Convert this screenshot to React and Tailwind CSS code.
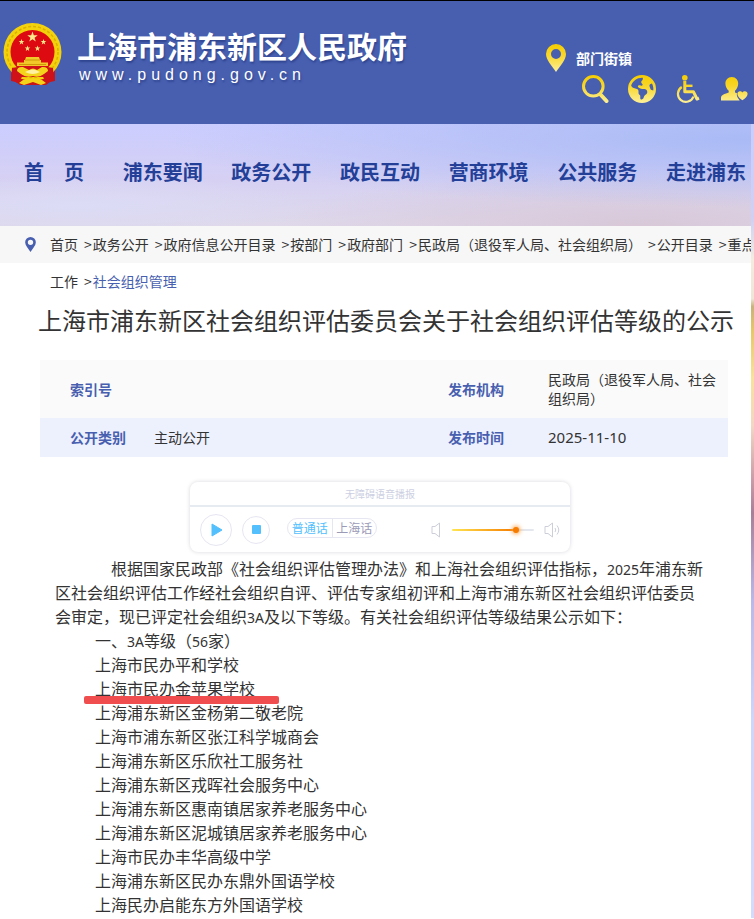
import { useState } from 'react';
import { FaEarthAmericas } from 'react-icons/fa6';

const navItems = ['首　页', '浦东要闻', '政务公开', '政民互动', '营商环境', '公共服务', '走进浦东'];

const crumbs = [
  '首页',
  '政务公开',
  '政府信息公开目录',
  '按部门',
  '政府部门',
  '民政局（退役军人局、社会组织局）',
  '公开目录',
  '重点工作',
  '社会组织管理',
];

const orgs = [
  { name: '上海市民办平和学校' },
  { name: '上海市民办金苹果学校', marked: true },
  { name: '上海浦东新区金杨第二敬老院' },
  { name: '上海市浦东新区张江科学城商会' },
  { name: '上海浦东新区乐欣社工服务社' },
  { name: '上海浦东新区戎晖社会服务中心' },
  { name: '上海浦东新区惠南镇居家养老服务中心' },
  { name: '上海浦东新区泥城镇居家养老服务中心' },
  { name: '上海市民办丰华高级中学' },
  { name: '上海浦东新区民办东鼎外国语学校' },
  { name: '上海民办启能东方外国语学校' },
];

function Star({ x, y, r }) {
  const pts = [];
  for (let i = 0; i < 10; i++) {
    const a = (Math.PI / 5) * i - Math.PI / 2;
    const d = i % 2 ? r * 0.4 : r;
    pts.push(`${x + d * Math.cos(a)},${y + d * Math.sin(a)}`);
  }
  return <polygon points={pts.join(' ')} fill="#ffe98a" />;
}

function Emblem() {
  return (
    <svg viewBox="0 0 60 65" className="h-[65px] w-[60px] shrink-0" aria-hidden="true">
      <path d="M8 44L8 60L13 61L17 64H43L47 61L52 60L52 44Z" fill="#c9151a" />
      <circle cx="29.5" cy="31" r="29" fill="#f3d20c" />
      <circle cx="29.5" cy="31" r="25.5" fill="none" stroke="#dcb000" strokeWidth="1.5" strokeDasharray="3 2" />
      <circle cx="29.5" cy="31" r="22" fill="#dd0a12" />
      <Star x={29.5} y={16} r={5.5} />
      <Star x={18.5} y={21} r={3} />
      <Star x={40.5} y={21} r={3} />
      <Star x={24.5} y={27.5} r={3} />
      <Star x={34.5} y={27.5} r={3} />
      <path d="M23 36H36L37 39H38V41.5H45V45H14V41.5H21V39H22Z" fill="#f1c929" />
      <path d="M22 39H37M16 43.5H43" stroke="#c98d00" strokeWidth="0.8" fill="none" />
      <path d="M9 47L20 45H39L50 47L51 58L45 62L40 56H19L14 62L8 58Z" fill="#cf1219" />
      <path d="M14 50Q14 45.5 20 46L26 49Q30 46 34 49L39 46Q45 45.5 45 50L41 53Q36 57 30 55Q23 57 18 53Z" fill="#f4d31a" />
      <path d="M22 51Q30 46 37 51Q30 55 22 51Z" fill="#fff0a0" />
      <path d="M20 59Q30 56 39 59L43 62L38 64L30 61L21 64L16 62Z" fill="#f4d31a" />
    </svg>
  );
}

function GoldDefs() {
  return (
    <svg width="0" height="0" className="absolute" aria-hidden="true">
      <defs>
        <linearGradient id="gold" x1="0" y1="0" x2="0" y2="1">
          <stop offset="0" stopColor="#f6cd00" />
          <stop offset="0.4" stopColor="#f8d62a" />
          <stop offset="1" stopColor="#fdf09a" />
        </linearGradient>
        <linearGradient id="gold-abs" gradientUnits="userSpaceOnUse" x1="0" y1="0" x2="0" y2="28">
          <stop offset="0" stopColor="#f6cd00" />
          <stop offset="0.4" stopColor="#f8d62a" />
          <stop offset="1" stopColor="#fdf09a" />
        </linearGradient>
      </defs>
    </svg>
  );
}

function SearchIcon() {
  return (
    <svg viewBox="1 0 28 28" className="size-7" fill="none" stroke="url(#gold-abs)">
      <circle cx="12.3" cy="11.3" r="9.8" strokeWidth="3" />
      <path d="M19.5 19.5L25.5 26" strokeWidth="4" strokeLinecap="round" />
    </svg>
  );
}

function WheelchairIcon() {
  return (
    <svg viewBox="0 0 28 28" className="size-7" fill="none" stroke="url(#gold-abs)" strokeWidth="2">
      <circle cx="10.8" cy="2.8" r="2.8" fill="url(#gold-abs)" stroke="none" />
      <path d="M10.8 6V16.8H19.5L23 24L25 23.2" strokeWidth="3" strokeLinejoin="round" />
      <path d="M10 10.8H18.5" strokeWidth="2.4" />
      <path d="M7.8 12A8 8 0 1 0 19.5 21.5" strokeWidth="2.2" />
    </svg>
  );
}

function UserIcon() {
  return (
    <svg viewBox="0 0 28 28" className="size-7" fill="url(#gold-abs)">
      <path d="M11.8 2C15.8 2 18.2 5 18.2 8.6C18.2 12 16.6 14.3 15 15.8V17.6L17 18.3C16.3 20.8 17.5 23 19.7 25.4H1V23C1 20.5 3.3 19.4 8.7 17.6V15.8C7 14.3 5.4 12 5.4 8.6C5.4 5 7.8 2 11.8 2Z" />
      <path d="M22.4 17.6C23.5 15.6 27.6 15.6 27.6 19C27.6 21.5 24.7 23.5 22.4 25.3C20.1 23.5 17.4 21.5 17.4 19C17.4 15.6 21.3 15.6 22.4 17.6Z" />
    </svg>
  );
}

function Pin({ className }) {
  return (
    <svg viewBox="0 0 20 28" className={className} aria-hidden="true">
      <path
        fillRule="evenodd"
        d="M10 0A10 10 0 0 1 20 10C20 16 14 22 10 28C6 22 0 16 0 10A10 10 0 0 1 10 0ZM10 5A5 5 0 1 0 10 15A5 5 0 1 0 10 5Z"
      />
    </svg>
  );
}

function Header() {
  return (
    <header className="flex h-[125px] border-t border-black bg-[#485fb0]">
      <GoldDefs />
      <a href="#" className="flex items-start pl-[3px] pt-5 text-white">
        <Emblem />
        <span className="pl-3.5 pt-1.5 [text-shadow:1px_2px_2px_#2f4590]">
          <span className="block text-[30px] leading-9 font-bold whitespace-nowrap">上海市浦东新区人民政府</span>
          <span className="block pl-0.5 font-['Liberation_Sans'] text-base leading-6 tracking-[5px]">www.pudong.gov.cn</span>
        </span>
      </a>
      <div className="ml-auto pt-[43px] pr-1.5">
        <a href="#" className="-ml-0.5 flex h-7 items-center gap-2.5 text-sm font-bold text-white">
          <Pin className="h-7 w-5 fill-[url(#gold)]" />
          部门街镇
        </a>
        <div className="mt-[3px] flex gap-[18px] pl-[34px]">
          <button aria-label="搜索"><SearchIcon /></button>
          <button aria-label="语言"><FaEarthAmericas className="size-7 fill-[url(#gold)]" /></button>
          <button aria-label="无障碍"><WheelchairIcon /></button>
          <button aria-label="用户中心"><UserIcon /></button>
        </div>
      </div>
    </header>
  );
}

function MainNav() {
  return (
    <nav className="flex h-[102px] items-center justify-between bg-[radial-gradient(ellipse_at_100%_15%,#a9baf5_0%,transparent_55%),radial-gradient(ellipse_at_10%_80%,#dcdcf6_0%,transparent_25%),radial-gradient(ellipse_at_85%_100%,#d8c8d8_0%,transparent_40%),linear-gradient(to_bottom,#cbcdff,#d5d0f4_50%,#dfd9ea)] pr-[5px] pb-1.5 pl-3.5 text-xl font-bold text-[#233f97]">
      {navItems.map((item) => (
        <a key={item} href="#" className="w-20 text-center whitespace-nowrap">
          {item}
        </a>
      ))}
    </nav>
  );
}

function Breadcrumb() {
  return (
    <nav aria-label="当前位置" className="h-[74px] overflow-hidden bg-[linear-gradient(#f7f7f7_37px,#fff_37px)]">
      <div className="-mr-2 flex">
        <Pin className="mt-[11px] mr-[14px] ml-[25px] h-[15px] w-[11px] shrink-0 fill-[#485fb0]" />
        <p className="text-sm leading-[37px]">
          {crumbs.map((crumb, i) => (
            <span key={crumb}>
              {i > 0 && <span className="mr-px ml-1.5">&gt;</span>}
              <a href="#" className={i === crumbs.length - 1 ? 'text-[#485fb0]' : ''}>
                {crumb}
              </a>
            </span>
          ))}
        </p>
      </div>
    </nav>
  );
}

function InfoTable() {
  return (
    <table className="mt-[22px] w-full table-fixed text-left text-sm leading-[19px]">
      <colgroup>
        <col className="w-[114px]" />
        <col />
        <col className="w-[100px]" />
        <col className="w-[180px]" />
      </colgroup>
      <tbody>
        <tr className="h-[58px] bg-[#fafafa]">
          <th scope="row" className="pl-[30px] text-[#485fb0]">索引号</th>
          <td></td>
          <th scope="row" className="text-[#485fb0]">发布机构</th>
          <td className="pr-2">民政局（退役军人局、社会组织局）</td>
        </tr>
        <tr className="h-[39px] bg-[#edf0fd]">
          <th scope="row" className="pl-[30px] text-[#485fb0]">公开类别</th>
          <td>主动公开</td>
          <th scope="row" className="text-[#485fb0]">发布时间</th>
          <td className="font-['Noto_Sans'] text-[15px]">2025-11-10</td>
        </tr>
      </tbody>
    </table>
  );
}

function AudioPlayer() {
  const [volume, setVolume] = useState(80);
  const [lang, setLang] = useState('普通话');

  return (
    <section className="mt-[25px] ml-[150px] w-[380px] rounded-lg bg-white shadow-[0_0_4px_#d8d8de]">
      <h2 className="h-[23px] text-center text-[10px] leading-[24px] text-[#cdd0e2]">无障碍语音播报</h2>
      <div className="flex h-[47px] items-center border-t-2 border-[#e6ebf1] pl-2.5">
        <button aria-label="播放" className="flex size-8 items-center justify-center rounded-full border border-[#e6e6f2]">
          <svg viewBox="0 0 12 14" className="ml-0.5 h-3.5 w-3" fill="#53c0fd">
            <path d="M1 1L11 7L1 13Z" stroke="#53c0fd" strokeLinejoin="round" />
          </svg>
        </button>
        <button aria-label="停止" className="ml-2.5 flex size-7 items-center justify-center rounded-full border border-[#e6e6f2]">
          <span className="size-[9px] rounded-[1px] bg-[#53c0fd]" />
        </button>
        <div className="mb-1 ml-[17px] flex h-5 w-[90px] items-center rounded-full border border-[#e6e6f2] text-xs leading-[18px]">
          {['普通话', '上海话'].map((name) => (
            <button
              key={name}
              onClick={() => setLang(name)}
              className={`flex-1 whitespace-nowrap first:border-r first:border-[#e6e6f2] ${
                lang === name ? 'text-[#53c0fd]' : 'text-[#9b9bb8]'
              }`}
            >
              {name}
            </button>
          ))}
        </div>
        <svg viewBox="0 0 10 16" className="ml-[54px] h-4 w-2.5" fill="none" stroke="#cccfd8">
          <path d="M1 4.5H4L8.5 1V15L4 11.5H1Z" />
        </svg>
        <input
          type="range"
          aria-label="音量"
          value={volume}
          onChange={(e) => setVolume(Number(e.target.value))}
          className="ml-[11px] h-0.5 w-[82px] appearance-none rounded bg-[linear-gradient(to_right,#ffe552,#f57c00_77%,#e4e7ee_77%)] [&::-webkit-slider-thumb]:size-1.5 [&::-webkit-slider-thumb]:appearance-none [&::-webkit-slider-thumb]:rounded-full [&::-webkit-slider-thumb]:bg-[#f57c00] [&::-webkit-slider-thumb]:shadow-[0_0_4px_1px_#ffa64d]"
        />
        <svg viewBox="0 0 16 16" className="ml-2.5 size-4" fill="none" stroke="#cccfd8">
          <path d="M1 4.5H4L8.5 1V15L4 11.5H1ZM11 6Q12.5 8 11 10M13 3.5Q16.5 8 13 12.5" />
        </svg>
      </div>
    </section>
  );
}

// half-width digits and letters inside the Chinese body text
function Num({ children }) {
  return <span className="font-['Noto_Sans'] text-[14px] leading-none">{children}</span>;
}

function Article() {
  return (
    <article className="ml-[15px] max-w-[655px] pt-1 pb-0.5 text-base leading-6">
      <p className="indent-14">
        根据国家民政部《社会组织评估管理办法》和上海社会组织评估指标，<Num>2025</Num>年浦东新区社会组织评估工作经社会组织自评、评估专家组初评和上海市浦东新区社会组织评估委员会审定，现已评定社会组织<Num>3A</Num>及以下等级。有关社会组织评估等级结果公示如下：
      </p>
      <h2 className="pl-10">
        一、<Num>3A</Num>等级（<Num>56</Num>家）
      </h2>
      <ul className="pl-10">
        {orgs.map((org) => (
          <li key={org.name} className="relative">
            {org.name}
            {org.marked && <span className="absolute top-5 -left-[11px] h-2 w-[195px] rounded-xs bg-[#f04e4e]" />}
          </li>
        ))}
      </ul>
    </article>
  );
}

export default function App() {
  return (
    <div lang="zh-CN" className="overflow-hidden font-['Noto_Sans_CJK_SC',sans-serif] text-[#333]">
      <Header />
      <div className="bg-[linear-gradient(to_bottom,#c9ceff_0%,#cfd0f4_12%,#f3ecdf_17%,#efe6d8_22%,#c9b27a_23%,#e6c765_26%,#f9e29a_32%,#f3d6c4_38%,#c99aa6_45%,#a97f98_49%,#b9b8ea_60%,#cdd6fb_75%,#d3dcfd_100%)] pr-[3px]">
        <main className="-mt-px bg-white">
          <MainNav />
          <Breadcrumb />
          <div className="pr-[23px] pl-10">
            <h1 className="-mr-4 -ml-0.5 pt-0.5 text-2xl leading-9">上海市浦东新区社会组织评估委员会关于社会组织评估等级的公示</h1>
            <InfoTable />
            <AudioPlayer />
            <Article />
          </div>
        </main>
      </div>
    </div>
  );
}
